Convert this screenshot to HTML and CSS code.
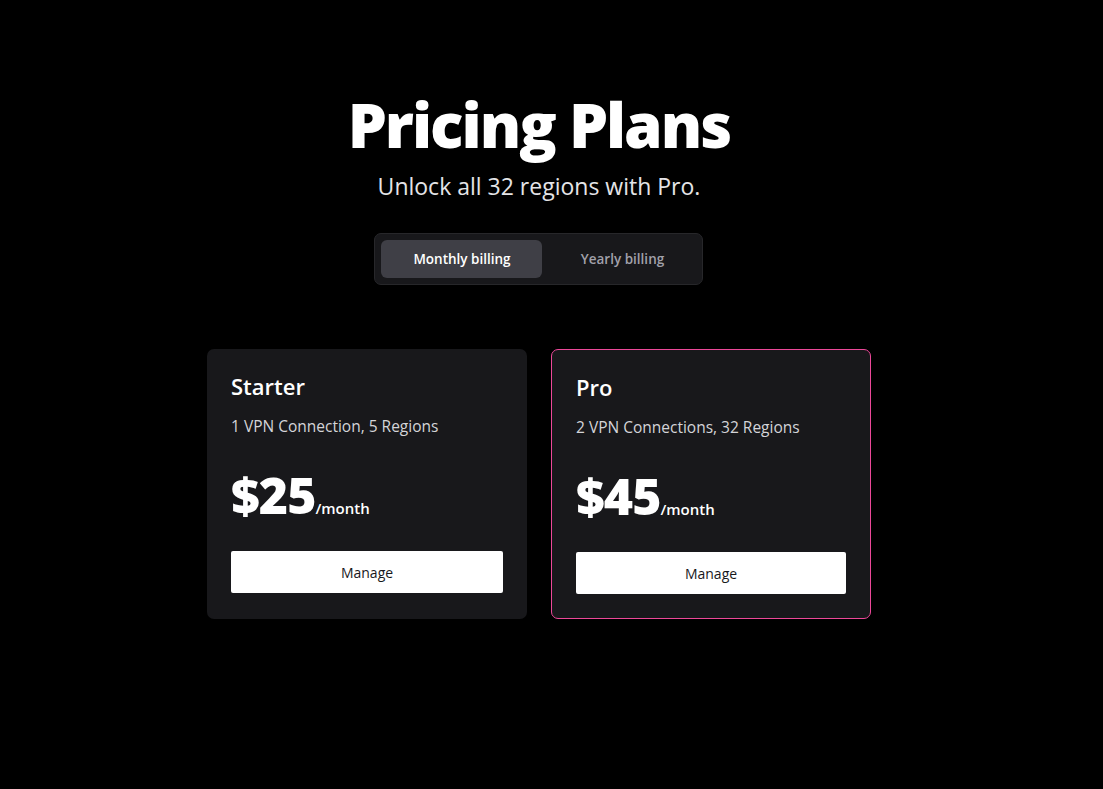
FILE: index.html
```html
<!DOCTYPE html>
<html lang="en">
  <head>
    <meta charset="UTF-8" />
    <meta name="viewport" content="width=device-width, initial-scale=1.0" />
    <title>Pricing Plans</title>
    <link rel="stylesheet" href="styles.css">
  </head>

  <body>
    <main class="pricing">
      <header class="pricing-head">
        <h1>Pricing Plans</h1>
        <p class="lead">Unlock all 32 regions with Pro.</p>
        <div class="billing-toggle">
          <button class="billing-btn active">Monthly billing</button>
          <button class="billing-btn yearly">Yearly billing</button>
        </div>
      </header>

      <section class="plans">
        <div class="plan">
          <h2>Starter</h2>
          <p class="plan-desc">1 VPN Connection, 5 Regions</p>
          <p class="plan-price"><span class="amount">$25</span><span class="per">/month</span></p>
          <button class="manage">Manage</button>
        </div>
        <div class="plan plan-pro">
          <h2>Pro</h2>
          <p class="plan-desc">2 VPN Connections, 32 Regions</p>
          <p class="plan-price"><span class="amount">$45</span><span class="per">/month</span></p>
          <button class="manage">Manage</button>
        </div>
      </section>
    </main>
  </body>
</html>
```

FILE: styles.css
```css
* {
  padding: 0;
  margin: 0;
  box-sizing: border-box;
}

body {
  background: #000;
  color: #fff;
  font-family: "Open Sans", "Noto Sans", sans-serif;
  padding-right: 25px;
}

.pricing {
  display: flex;
  flex-direction: column;
  align-items: center;
  padding-top: 84px;
}

.pricing-head {
  display: flex;
  flex-direction: column;
  align-items: center;
}

h1 {
  font-size: 62px;
  font-weight: 800;
  line-height: 80px;
  letter-spacing: -2px;
}

.lead {
  font-size: 23px;
  line-height: 32px;
  color: #e4e4e7;
  margin-top: 6px;
}

.billing-toggle {
  display: flex;
  gap: 6px;
  margin-top: 31px;
  padding: 6px;
  background: #18181b;
  border: 1px solid #27272a;
  border-radius: 7px;
}

.billing-btn {
  width: 161px;
  height: 38px;
  border: none;
  border-radius: 6px;
  background: transparent;
  color: #a1a1aa;
  font-family: inherit;
  font-size: 13.5px;
  font-weight: 600;
}

.billing-btn.yearly {
  width: 148px;
}

.billing-btn.active {
  background: #3f3f46;
  color: #fff;
}

.plans {
  display: flex;
  gap: 24px;
  margin-top: 64px;
}

.plan {
  width: 320px;
  padding: 22px 24px 24px;
  background: #18181b;
  border-radius: 7px;
}

.plan-pro {
  border: 1px solid #ec4899;
}

.plan h2 {
  font-size: 22px;
  font-weight: 600;
  line-height: 30px;
}

.plan-desc {
  margin-top: 13px;
  font-size: 15.5px;
  line-height: 24px;
  color: #d4d4d8;
}

.plan-price {
  margin-top: 27px;
  display: flex;
  align-items: baseline;
}

.amount {
  font-size: 50px;
  font-weight: 800;
  line-height: 60px;
  letter-spacing: -1px;
}

.per {
  font-size: 15px;
  font-weight: 600;
}

.manage {
  display: block;
  width: 100%;
  height: 42px;
  margin-top: 26px;
  border: none;
  border-radius: 2px;
  background: #fff;
  color: #18181b;
  font-family: inherit;
  font-size: 14px;
  font-weight: 500;
}
```
